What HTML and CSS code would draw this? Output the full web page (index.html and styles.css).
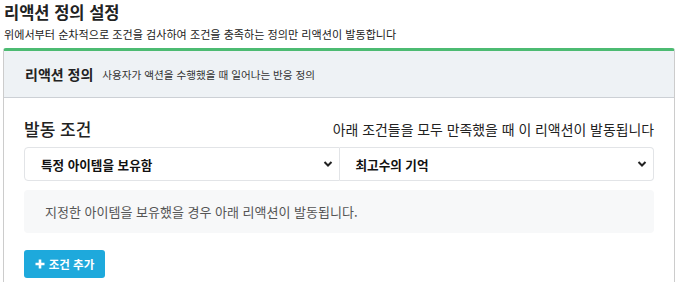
FILE: index.html
```html
<!DOCTYPE html>
<html lang="ko">
<head>
    <meta charset="UTF-8">
    <meta name="viewport" content="width=device-width, initial-scale=1.0">
    <title>리액션 정의 설정</title>
    <link rel="stylesheet" href="styles.css">
</head>
<body>
    <header class="page-head">
        <h1>리액션 정의 설정</h1>
        <p>위에서부터 순차적으로 조건을 검사하여 조건을 충족하는 정의만 리액션이 발동합니다</p>
    </header>
    <section class="card">
        <div class="card-header">
            <strong>리액션 정의</strong>
            <span>사용자가 액션을 수행했을 때 일어나는 반응 정의</span>
        </div>
        <div class="card-body">
            <div class="cond-head">
                <h2>발동 조건</h2>
                <span>아래 조건들을 모두 만족했을 때 이 리액션이 발동됩니다</span>
            </div>
            <div class="selects">
                <div class="select">
                    <span>특정 아이템을 보유함</span>
                    <svg width="10" height="8" viewBox="0 0 10 8"><path d="M1.5 2 L5 5.5 L8.5 2" fill="none" stroke="#222" stroke-width="2"/></svg>
                </div>
                <div class="select">
                    <span>최고수의 기억</span>
                    <svg width="10" height="8" viewBox="0 0 10 8"><path d="M1.5 2 L5 5.5 L8.5 2" fill="none" stroke="#222" stroke-width="2"/></svg>
                </div>
            </div>
            <div class="info">지정한 아이템을 보유했을 경우 아래 리액션이 발동됩니다.</div>
            <button class="btn-add">
                <svg width="10" height="10" viewBox="0 0 10 10"><path d="M5 0.5 V9.5 M0.5 5 H9.5" stroke="#fff" stroke-width="2.6"/></svg>
                조건 추가
            </button>
        </div>
    </section>
</body>
</html>
```

FILE: styles.css
```css
body {
    font-family: 'Noto Sans CJK KR', 'Noto Sans', sans-serif;
    margin: 0;
    padding: 0 5px 0 3px;
    background-color: #fff;
    color: #212529;
}
.page-head {
    padding-left: 1px;
}
.page-head h1 {
    font-size: 16.5px;
    font-weight: 700;
    margin: 0;
    line-height: 25px;
    color: #222;
}
.page-head p {
    font-size: 11.1px;
    margin: 0;
    line-height: 18px;
    color: #222;
}
.card {
    margin-top: 5px;
    border: 1px solid #ccc;
    border-top: 3px solid #4cbb72;
    border-radius: 3px 3px 0 0;
}
.card-header {
    background-color: #eef2f5;
    border-bottom: 1px solid #ccd0d5;
    height: 46px;
    display: flex;
    align-items: center;
    gap: 9px;
    padding-left: 21px;
}
.card-header strong {
    font-size: 14px;
    font-weight: 700;
    color: #222;
}
.card-header span {
    font-size: 10.6px;
    color: #333;
}
.card-body {
    padding: 18px 20px 10px 20px;
}
.cond-head {
    display: flex;
    justify-content: space-between;
    align-items: center;
    height: 26px;
}
.cond-head h2 {
    margin: 0;
    font-size: 17px;
    font-weight: 500;
    color: #222;
    line-height: 24px;
}
.cond-head span {
    font-size: 13.9px;
    color: #222;
    line-height: 22px;
}
.selects {
    display: flex;
    margin-top: 5px;
}
.select {
    flex: 1;
    height: 34px;
    box-sizing: border-box;
    border: 1px solid #e2e4e7;
    display: flex;
    align-items: center;
    justify-content: space-between;
    padding: 0 6px 0 16px;
    font-size: 12.6px;
    font-weight: 700;
    color: #111;
}
.select:first-child {
    border-radius: 4px 0 0 4px;
}
.select + .select {
    border-left: none;
    border-radius: 0 4px 4px 0;
}
.info {
    margin-top: 9px;
    background-color: #f7f8f9;
    border-radius: 4px;
    height: 43px;
    display: flex;
    align-items: center;
    padding-left: 21px;
    font-size: 13px;
    color: #555;
}
.btn-add {
    margin-top: 17px;
    background-color: #1ea9dc;
    border: none;
    border-radius: 3px;
    color: #fff;
    font-family: inherit;
    font-size: 11.5px;
    font-weight: 700;
    height: 28px;
    width: 81px;
    padding: 0;
    display: flex;
    align-items: center;
    justify-content: center;
    gap: 4px;
}
```
